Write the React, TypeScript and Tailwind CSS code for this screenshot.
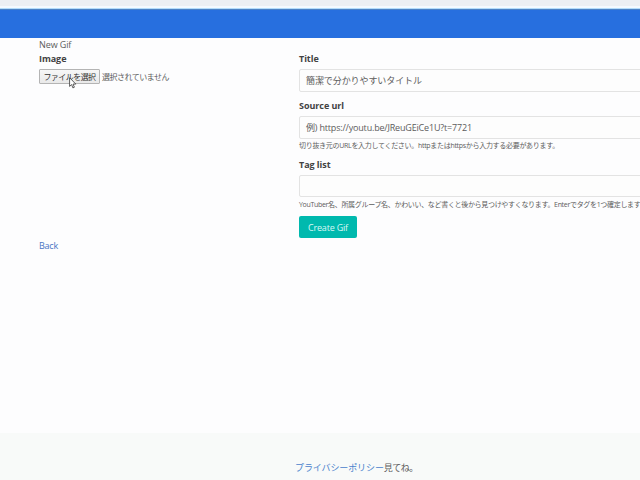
import React from "react";

function Label({ children }: { children: React.ReactNode }) {
  return <div className="h-[14px] text-[9px] leading-[16px] font-bold tracking-[-0.05px] text-[#424242]">{children}</div>;
}

function Field({ value = "", className = "" }: { value?: string; className?: string }) {
  return (
    <div className={`w-[360px] rounded-[2px] border border-[#e3e3e3] bg-[#fdfdfd] px-[6px] text-[9px] whitespace-nowrap text-[#5c5c5c] ${className}`}>
      {value}
    </div>
  );
}

export default function App() {
  return (
    <div className="flex h-[480px] w-[640px] flex-col overflow-hidden bg-[#fdfdfe] font-['Open_Sans','Noto_Sans_CJK_JP',sans-serif] text-[9px] text-[#5c5c5c]">
      <div className="h-[6px] shrink-0 bg-[#eceff3]" />
      <div className="h-[2px] shrink-0 bg-[#f4faff]" />
      <div className="h-[1px] shrink-0 bg-[#b4dcfa]" />
      <header className="h-[29px] shrink-0 border-t border-[#4c82c5] bg-[#276fdf]" />
      <main className="flex h-[395px] shrink-0 pl-[39px]">
        <section className="w-[260px] shrink-0">
          <div className="h-[13px] text-[9px] leading-[14px] tracking-[-0.1px]">New Gif</div>
          <Label>Image</Label>
          <div className="mt-[4px] flex items-center">
            <div className="relative">
              <button className="block h-[15px] w-[61px] rounded-[1px] border border-[#b4b4b4] bg-linear-to-b from-[#f7f7f7] to-[#e9e9e9] text-center text-[8px] leading-[13px] tracking-[-0.55px] whitespace-nowrap text-[#333]">
                ファイルを選択
              </button>
              <svg className="absolute top-[8px] left-[30px]" width="8" height="12" viewBox="0 0 8 12">
                <path d="M.6.7v8.7l2-1.8 1.3 3.3 1.5-.7-1.4-3.1h2.8z" fill="#fff" stroke="#333" strokeWidth=".8" />
              </svg>
            </div>
            <span className="ml-[2px] text-[8px] leading-[13px] tracking-[-0.5px] whitespace-nowrap">選択されていません</span>
          </div>
          <a className="mt-[155px] block h-[14px] text-[9px] leading-[14px] tracking-[-0.25px] text-[#4a76c4]">Back</a>
        </section>
        <section className="shrink-0 pt-[13px]">
          <Label>Title</Label>
          <Field value="簡潔で分かりやすいタイトル" className="mt-[4px] h-[23px] leading-[22px] tracking-[-0.08px]" />
          <div className="h-[6px]" />
          <Label>Source url</Label>
          <Field value="例) https://youtu.be/JReuGEiCe1U?t=7721" className="mt-[4px] h-[23px] leading-[22px] tracking-[-0.18px]" />
          <p className="mt-[1px] h-[12px] text-[7px] leading-[12px] tracking-[-0.3px] whitespace-nowrap">
            切り抜き元のURLを入力してください。httpまたはhttpsから入力する必要があります。
          </p>
          <div className="h-[5px]" />
          <Label>Tag list</Label>
          <Field className="mt-[4px] h-[22px]" />
          <p className="mt-[2px] h-[12px] text-[7px] leading-[12px] tracking-[-0.32px] whitespace-nowrap">
            YouTuber名、所属グループ名、かわいい、など書くと後から見つけやすくなります。Enterでタグを1つ確定します
          </p>
          <button className="mt-[5px] block h-[22px] w-[58px] rounded-[2px] bg-[#00b9ae] text-[9px] leading-[23px] tracking-[-0.2px] text-[#d9f8f5]">
            Create Gif
          </button>
        </section>
      </main>
      <footer className="flex h-[47px] shrink-0 bg-[#f8faf9] pt-[27px] pl-[295px] text-[9px] leading-[16px] whitespace-nowrap">
        <a className="tracking-[-0.1px] text-[#4a82cc]">プライバシーポリシー</a>
        <span className="tracking-[-0.5px]">見てね。</span>
      </footer>
    </div>
  );
}
